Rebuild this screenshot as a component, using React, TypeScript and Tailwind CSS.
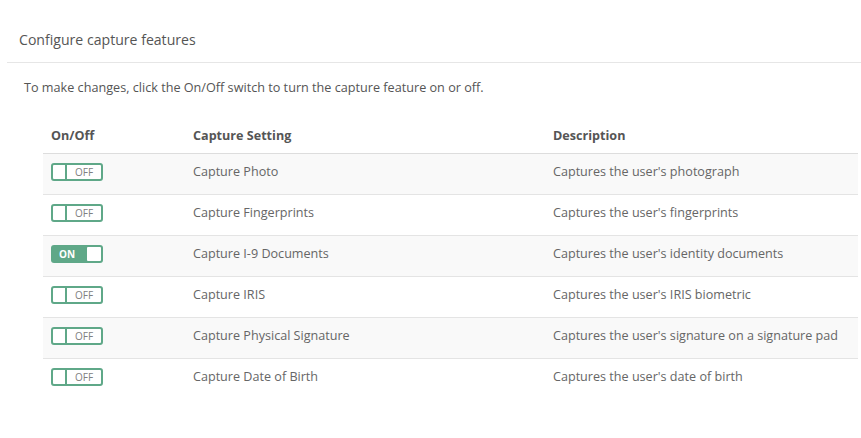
import React, { useState } from 'react';

const features = [
  { name: 'Capture Photo', desc: "Captures the user's photograph", on: false },
  { name: 'Capture Fingerprints', desc: "Captures the user's fingerprints", on: false },
  { name: 'Capture I-9 Documents', desc: "Captures the user's identity documents", on: true },
  { name: 'Capture IRIS', desc: "Captures the user's IRIS biometric", on: false },
  { name: 'Capture Physical Signature', desc: "Captures the user's signature on a signature pad", on: false },
  { name: 'Capture Date of Birth', desc: "Captures the user's date of birth", on: false },
];

function Toggle({ on, onClick }: { on: boolean; onClick: () => void }) {
  if (on) {
    return (
      <button
        onClick={onClick}
        className="flex h-[18px] w-[52px] items-center justify-between rounded-[3px] bg-[#5fa888] p-[2px] pl-[8px]"
      >
        <span className="text-[10px] font-bold leading-none text-white">ON</span>
        <span className="h-[14px] w-[14px] rounded-[1px] bg-white" />
      </button>
    );
  }
  return (
    <button
      onClick={onClick}
      className="flex h-[18px] w-[52px] items-stretch rounded-[3px] border-2 border-[#5fa888] bg-white"
    >
      <span className="w-[14px] border-r-2 border-[#5fa888]" />
      <span className="flex flex-1 items-center justify-center text-[10px] leading-none text-[#808080]">OFF</span>
    </button>
  );
}

export default function App() {
  const [items, setItems] = useState(features);

  const flip = (i: number) =>
    setItems(prev => prev.map((f, j) => (j === i ? { ...f, on: !f.on } : f)));

  return (
    <div className="h-[438px] w-[861px] bg-white pt-[29px] text-[#666]" style={{ fontFamily: '"Open Sans", sans-serif' }}>
      <div className="ml-[7px] border-b border-[#e6e6e6] pb-[11px] pl-[12px]">
        <h1 className="text-[14.1px] font-normal leading-[22px] text-[#555]">Configure capture features</h1>
      </div>
      <p className="ml-[24px] mt-[14px] text-[12.65px] leading-[20px] text-[#555]">
        To make changes, click the On/Off switch to turn the capture feature on or off.
      </p>

      <table className="ml-[43px] mt-[30px] w-[815px] border-collapse text-left text-[12.6px]">
        <thead>
          <tr className="border-b border-[#dddddd]">
            <th className="w-[142px] px-[8px] pb-[7px] font-bold text-[#555]">On/Off</th>
            <th className="w-[360px] px-[8px] pb-[7px] font-bold text-[#555]">Capture Setting</th>
            <th className="px-[8px] pb-[7px] font-bold text-[#555]">Description</th>
          </tr>
        </thead>
        <tbody>
          {items.map((f, i) => (
            <tr
              key={f.name}
              className={`h-[41px] ${i < items.length - 1 ? 'border-b border-[#e4e4e4]' : ''} ${i % 2 === 0 ? 'bg-[#f9f9f9]' : 'bg-white'}`}
            >
              <td className="px-[8px] pt-[9px] align-top">
                <Toggle on={f.on} onClick={() => flip(i)} />
              </td>
              <td className="px-[8px] pt-[9px] align-top leading-[18px]">{f.name}</td>
              <td className="px-[8px] pt-[9px] align-top leading-[18px]">{f.desc}</td>
            </tr>
          ))}
        </tbody>
      </table>
    </div>
  );
}
